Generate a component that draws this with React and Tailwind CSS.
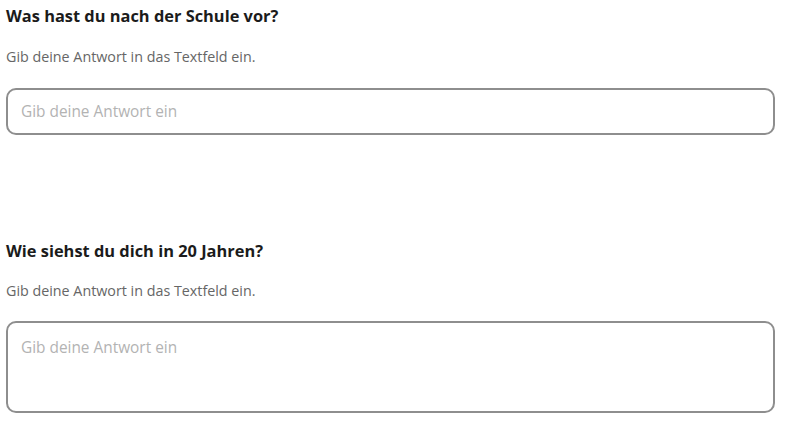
export default function App() {
  return (
    <div
      className="min-h-screen w-full bg-white pl-[6px] pr-[13px] pt-[5px]"
      style={{ fontFamily: '"Open Sans", "Noto Sans", sans-serif' }}
    >
      <section>
        <h3 className="text-[16.4px] leading-[22px] font-bold text-[#1b1b1b]">
          Was hast du nach der Schule vor?
        </h3>
        <p className="mt-[20px] text-[14.3px] leading-[20px] text-[#666666]">
          Gib deine Antwort in das Textfeld ein.
        </p>
        <input
          type="text"
          placeholder="Gib deine Antwort ein"
          className="mt-[21px] block w-full h-[47px] px-[13px] border-2 border-[#8e8e8e] rounded-[10px] text-[15.4px] text-[#333] placeholder:text-[#b3b3b3] focus:outline-none"
        />
      </section>

      <section className="mt-[105px]">
        <h3 className="text-[16.4px] leading-[22px] font-bold text-[#1b1b1b]">
          Wie siehst du dich in 20 Jahren?
        </h3>
        <p className="mt-[19px] text-[14.3px] leading-[20px] text-[#666666]">
          Gib deine Antwort in das Textfeld ein.
        </p>
        <textarea
          placeholder="Gib deine Antwort ein"
          className="mt-[20px] block w-full h-[92px] px-[13px] pt-[15px] border-2 border-[#8e8e8e] rounded-[10px] text-[15.4px] leading-[20px] text-[#333] placeholder:text-[#b3b3b3] resize-none focus:outline-none"
        />
      </section>
    </div>
  );
}
